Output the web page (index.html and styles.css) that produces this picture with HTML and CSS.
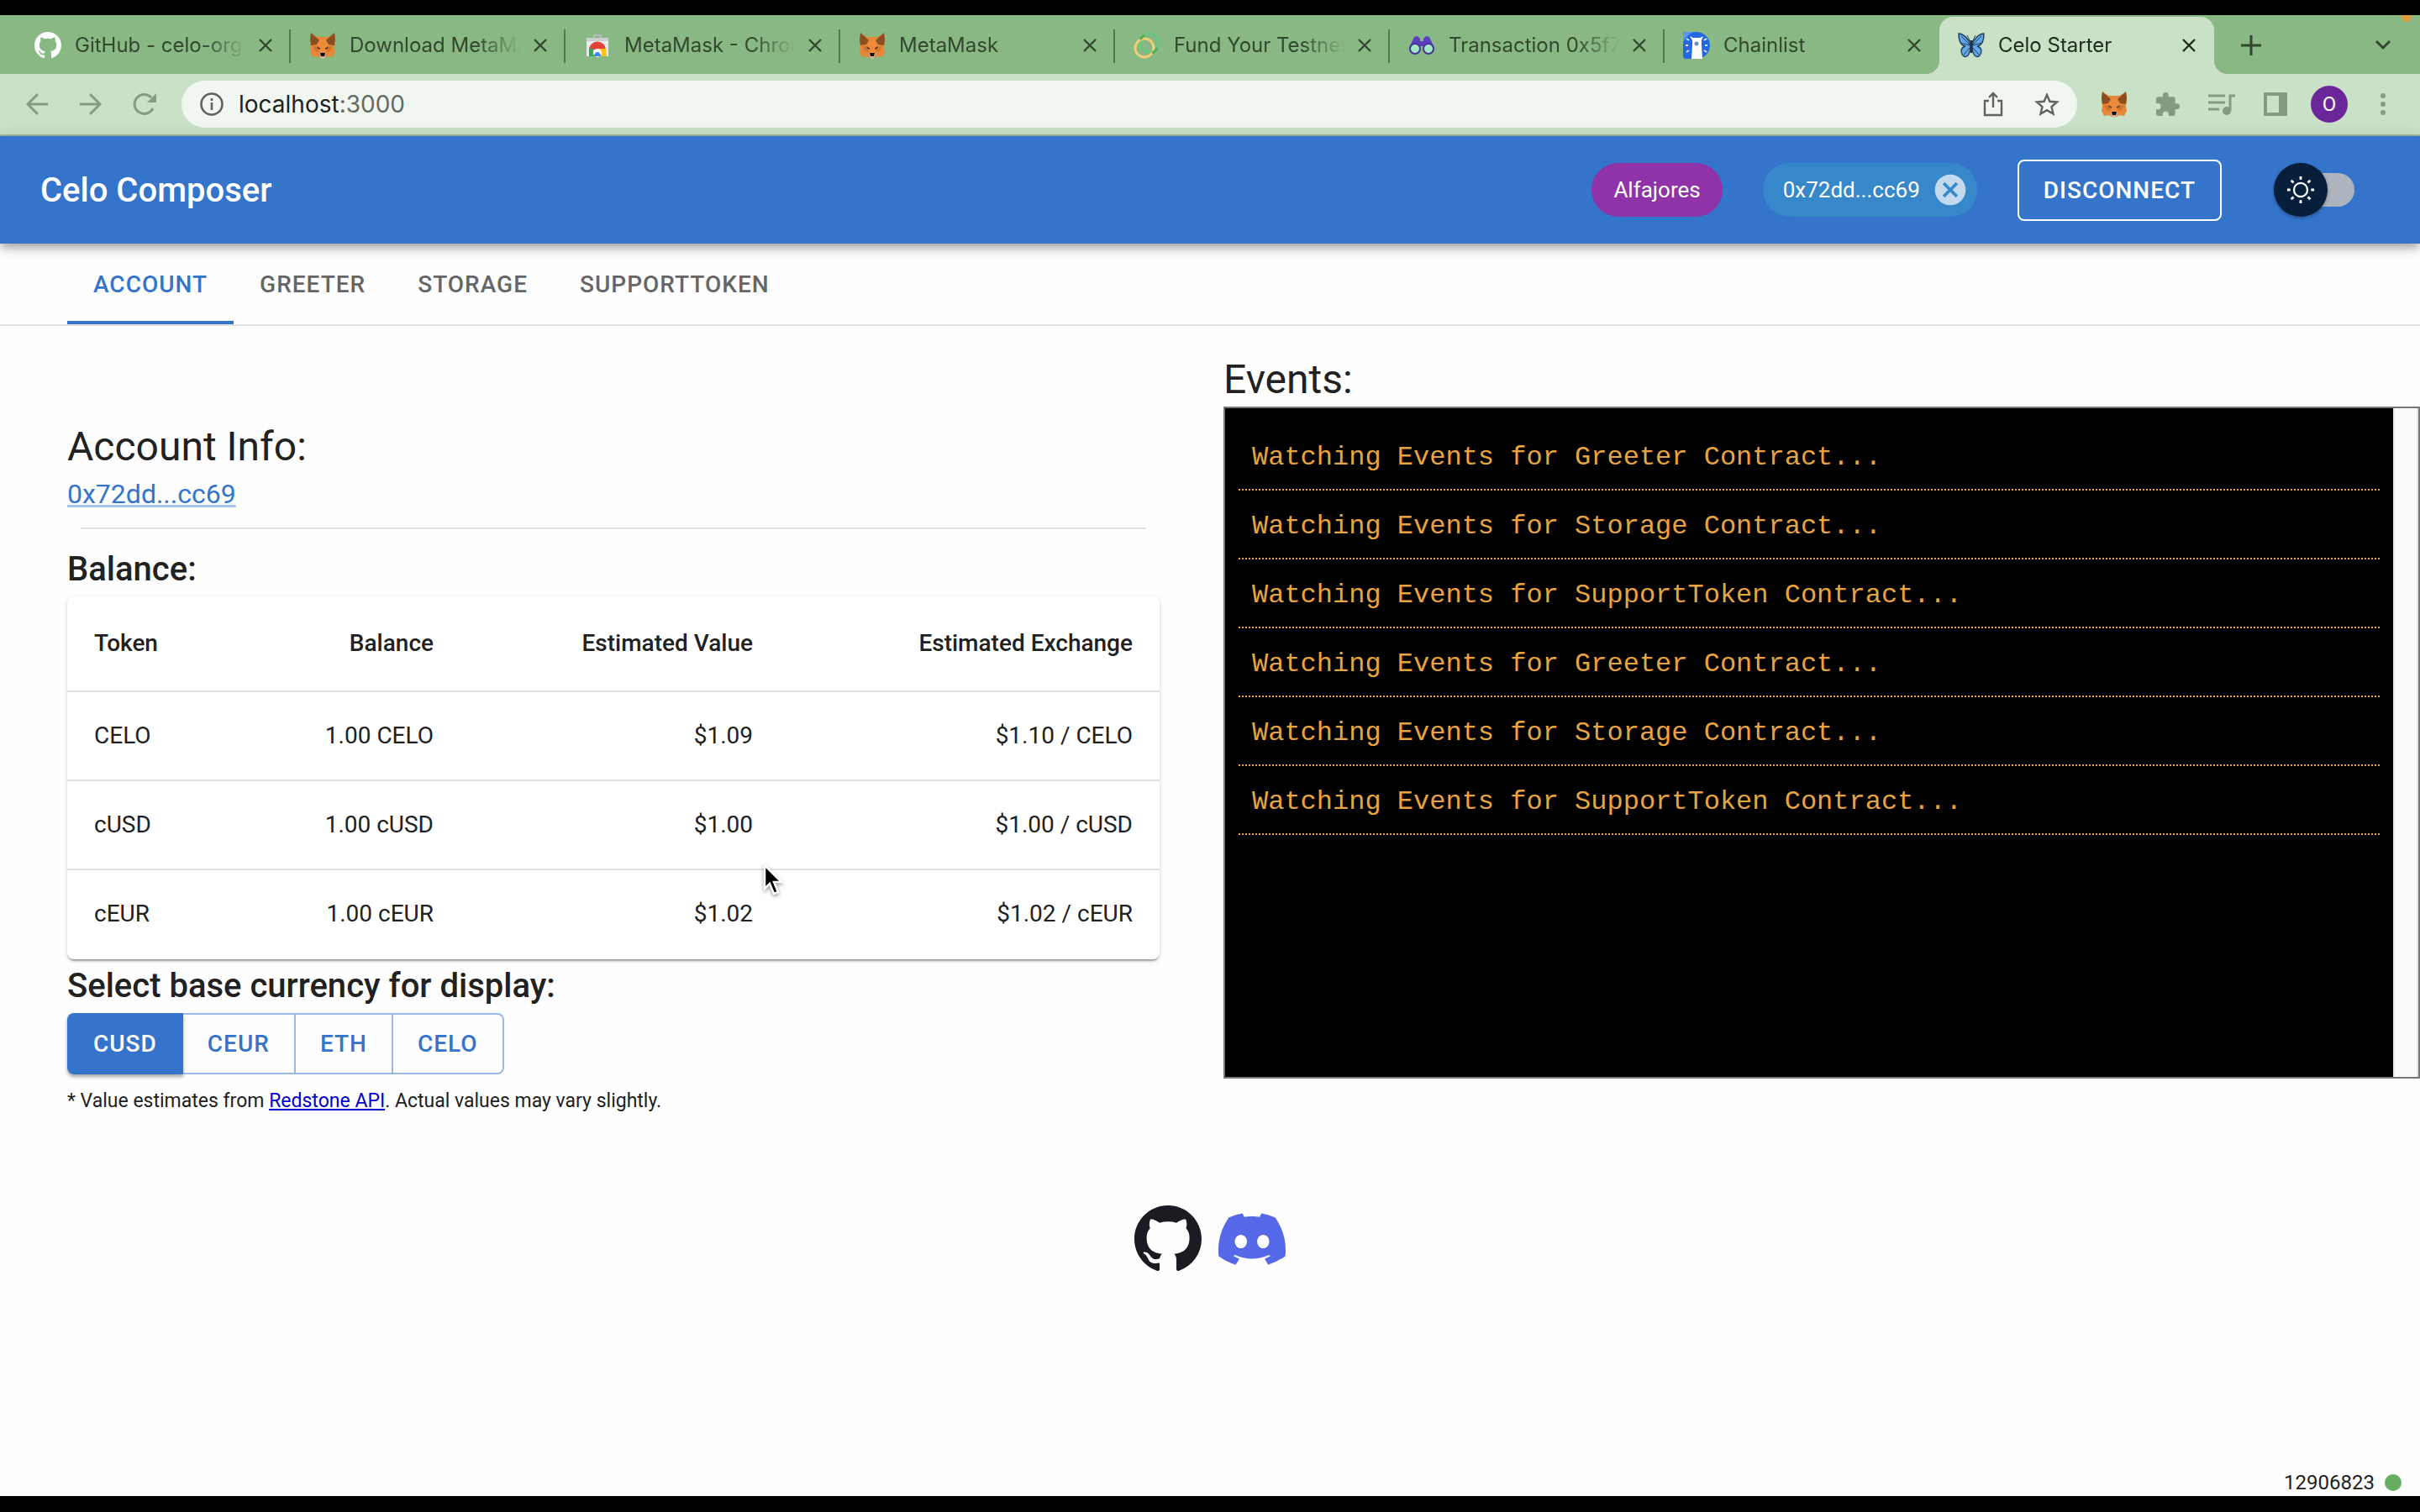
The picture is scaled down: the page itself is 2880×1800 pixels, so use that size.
FILE: index.html
```html
<!DOCTYPE html>
<html lang="en">
<head>
<meta charset="utf-8">
<title>Celo Starter</title>
<link rel="stylesheet" href="styles.css">
</head>
<body>
<svg class="sprite" aria-hidden="true">
  <symbol id="fox" viewBox="0 0 32 32">
    <path fill="#e58638" d="M2 2l8 4h12l8-4 1 8-1 9 1 5-3 6-6-1-3 2h-6l-3-2-6 1-3-6 1-5-1-9z"/>
    <path fill="#8a4e22" d="M2 1l10 9-3 5-7 1-1-7zM30 1L20 10l3 5 7 1 1-7z"/>
    <path fill="#ee8b3a" d="M12 10h8l3 8-4 7h-6l-4-7z"/>
    <path fill="#d4742c" d="M4 17l6 1 2 6-5-1zM28 17l-6 1-2 6 5-1z"/>
    <path fill="#5c4433" d="M9 17l4 2v2l-3-1zM23 17l-4 2v2l3-1z"/>
    <path fill="#c9b5a5" d="M12 25h8l-1 5-2 2h-2l-2-2z"/>
    <path fill="#0e0f12" d="M13 25h6l-1 4h-4z"/>
  </symbol>
  <symbol id="github" viewBox="0 0 16 16">
    <path d="M8 0C3.58 0 0 3.58 0 8c0 3.54 2.29 6.53 5.47 7.59.4.07.55-.17.55-.38 0-.19-.01-.82-.01-1.49-2.01.37-2.53-.49-2.69-.94-.09-.23-.48-.94-.82-1.13-.28-.15-.68-.52-.01-.53.63-.01 1.08.58 1.23.82.72 1.21 1.87.87 2.33.66.07-.52.28-.87.51-1.07-1.78-.2-3.64-.89-3.64-3.95 0-.87.31-1.59.82-2.15-.08-.2-.36-1.02.08-2.12 0 0 .67-.21 2.2.82.64-.18 1.32-.27 2-.27s1.36.09 2 .27c1.53-1.04 2.2-.82 2.2-.82.44 1.1.16 1.92.08 2.12.51.56.82 1.27.82 2.15 0 3.07-1.87 3.75-3.65 3.95.29.25.54.73.54 1.48 0 1.07-.01 1.93-.01 2.2 0 .21.15.46.55.38A8.01 8.01 0 0 0 16 8c0-4.42-3.58-8-8-8z"/>
  </symbol>
  <symbol id="cross" viewBox="0 0 16 16"><path d="M1 1l14 14M15 1L1 15" stroke="currentColor" stroke-width="2.4"/></symbol>
</svg>

<header class="browser">
  <div class="tab-strip">
    <div class="tab"><svg class="favicon white"><use href="#github"/></svg><span class="tab-title">GitHub - celo-org</span><button class="tab-close" aria-label="Close tab"><svg><use href="#cross"/></svg></button></div>
    <div class="tab"><svg class="favicon"><use href="#fox"/></svg><span class="tab-title">Download MetaMa</span><button class="tab-close" aria-label="Close tab"><svg><use href="#cross"/></svg></button></div>
    <div class="tab"><svg class="favicon" viewBox="0 0 32 32"><path fill="none" stroke="#b9bcbd" stroke-width="2" d="M12 8V4h8v4"/><path fill="#e8eaed" d="M3 7h26v22H3z"/><path fill="#ccced2" d="M3 7h26v4H3z"/><path fill="#e14434" d="M6 22a10 10 0 0 1 20-1H16z"/><path fill="#35a853" d="M6 19v10h8l-4-9z"/><path fill="#fbc116" d="M18 20h8l1 9h-9z"/><circle cx="16" cy="25" r="5" fill="#fff"/><path fill="#4285f4" d="M12 29a4 5 0 1 1 8 0z"/></svg><span class="tab-title">MetaMask - Chrom</span><button class="tab-close" aria-label="Close tab"><svg><use href="#cross"/></svg></button></div>
    <div class="tab"><svg class="favicon"><use href="#fox"/></svg><span class="tab-title">MetaMask</span><button class="tab-close" aria-label="Close tab"><svg><use href="#cross"/></svg></button></div>
    <div class="tab"><svg class="favicon" viewBox="0 0 32 32" fill="none" stroke-width="3"><circle cx="19" cy="13" r="11" stroke="#67c682"/><circle cx="13" cy="19" r="11" stroke="#f0ce75"/><path stroke="#4fae52" d="M8 9a11 11 0 0 1 5-5M28 19a11 11 0 0 1-6 6"/></svg><span class="tab-title">Fund Your Testnet</span><button class="tab-close" aria-label="Close tab"><svg><use href="#cross"/></svg></button></div>
    <div class="tab"><svg class="favicon" viewBox="0 0 32 32"><path fill="#5b3fc0" d="M1 19L6 8q1-3 5-3l3 3v3h4V8l3-3q4 0 5 3l5 11-9 2h-3l-1-4h-4l-1 4H9z"/><circle cx="8" cy="20" r="7" fill="#48329b"/><circle cx="24" cy="20" r="7" fill="#48329b"/><circle cx="8" cy="20" r="5" fill="#a3e6c0"/><circle cx="24" cy="20" r="5" fill="#a3e6c0"/></svg><span class="tab-title">Transaction 0x5f7</span><button class="tab-close" aria-label="Close tab"><svg><use href="#cross"/></svg></button></div>
    <div class="tab"><svg class="favicon" viewBox="0 0 32 32"><path fill="#2467e3" d="M0 3q0-3 3-3h13a16 16 0 0 1 0 32H3q-3 0-3-3z"/><path fill="#5f97f0" d="M0 3q0-3 3-3h9Q4 4 0 12z"/><path fill="#fff" d="M8 5l4 2h8l4-2-2 5v6l1 16H10l1-16v-6z"/><circle cx="16" cy="14" r="2.500" fill="#6f8fc4"/><path stroke="#dbe7fc" stroke-width="2" d="M3 16h3M4 8l3 2M4 24l3-2M26 16h3M25 10l3-2M25 22l3 2"/></svg><span class="tab-title">Chainlist</span><button class="tab-close" aria-label="Close tab"><svg><use href="#cross"/></svg></button></div>
    <div class="tab active"><svg class="favicon" viewBox="0 0 32 32"><path fill="#62a8ea" stroke="#22405e" stroke-width="1.400" d="M15 15C13 8 6 2 1 2c0 7 2 14 8 15-6 2-6 7-3 11 4 4 8 0 9-9zM17 15c2-7 9-13 14-13 0 7-2 14-8 15 6 2 6 7 3 11-4 4-8 0-9-9z"/><path fill="none" stroke="#22405e" d="M4 5l11 11L3 13M28 5L17 16l12-3M7 27l8-9M25 27l-8-9M15 12l-4-8M17 12l4-8"/><path stroke="#22303c" stroke-width="2.600" d="M16 10v15"/></svg><span class="tab-title">Celo Starter</span><button class="tab-close" aria-label="Close tab"><svg><use href="#cross"/></svg></button></div>
    <button class="new-tab" aria-label="New tab"><svg viewBox="0 0 24 24"><path stroke="currentColor" stroke-width="3" d="M12 0v24M0 12h24"/></svg></button>
    <button class="tab-search" aria-label="Search tabs"><svg viewBox="0 0 20 12"><path fill="none" stroke="currentColor" stroke-width="3" d="M2 1l8 8 8-8"/></svg></button>
    <span class="recording-dot"></span>
  </div>
  <div class="toolbar">
    <button class="tool" aria-label="Back"><svg viewBox="0 0 28 28"><path fill="none" stroke="currentColor" stroke-width="3" d="M27 14H3M15 2L3 14l12 12"/></svg></button>
    <button class="tool" aria-label="Forward"><svg viewBox="0 0 28 28"><path fill="none" stroke="currentColor" stroke-width="3" d="M1 14h24M13 2l12 12-12 12"/></svg></button>
    <button class="tool" aria-label="Reload"><svg viewBox="0 0 28 28"><path fill="none" stroke="currentColor" stroke-width="3" d="M24 19a11.500 11.500 0 1 1-2-13"/><path fill="currentColor" d="M28 1v11H17z"/></svg></button>
    <div class="address">
      <svg class="info" viewBox="0 0 28 28"><circle cx="14" cy="14" r="12.500" fill="none" stroke="currentColor" stroke-width="2.600"/><path stroke="currentColor" stroke-width="2.600" d="M14 12v9M14 7v3"/></svg>
      <span class="url">localhost<span class="port">:3000</span></span>
      <button class="tool dark" aria-label="Share"><svg viewBox="0 0 28 28"><path fill="none" stroke="currentColor" stroke-width="2.400" d="M9 10H4v17h20V10h-5M14 18V2M9 6l5-5 5 5"/></svg></button>
      <button class="tool dark" aria-label="Bookmark"><svg viewBox="0 0 28 28"><path fill="none" stroke="currentColor" stroke-width="2.400" d="M14 3l3.400 7.800 8.600.7-6.500 5.600 2 8.400-7.500-4.400-7.500 4.400 2-8.400L2 11.500l8.600-.7z"/></svg></button>
    </div>
    <button class="tool ext" aria-label="MetaMask"><svg><use href="#fox"/></svg></button>
    <button class="tool" aria-label="Extensions"><svg viewBox="2 1 21 21"><path fill="currentColor" d="M20.500 11H19V7a2 2 0 0 0-2-2h-4V3.500a2.500 2.500 0 0 0-5 0V5H4a2 2 0 0 0-2 2v3.800h1.500a2.700 2.700 0 0 1 0 5.400H2V20a2 2 0 0 0 2 2h3.800v-1.500a2.700 2.700 0 0 1 5.400 0V22H17a2 2 0 0 0 2-2v-4h1.500a2.500 2.500 0 0 0 0-5z"/></svg></button>
    <button class="tool wide" aria-label="Media"><svg viewBox="0 0 32 28"><path fill="none" stroke="currentColor" stroke-width="3" d="M0 4h20M0 12h20M0 20h13M26 22V4h6"/><circle cx="22" cy="22" r="5" fill="currentColor"/></svg></button>
    <button class="tool" aria-label="Side panel"><svg viewBox="0 0 28 28"><path fill="currentColor" fill-rule="evenodd" d="M0 0h28v28H0zM4 4v20h14V4z"/></svg></button>
    <button class="avatar">O</button>
    <button class="tool" aria-label="Menu"><svg viewBox="0 0 28 28"><g fill="currentColor"><circle cx="14" cy="4" r="3"/><circle cx="14" cy="14" r="3"/><circle cx="14" cy="24" r="3"/></g></svg></button>
  </div>
</header>

<div class="app-bar">
  <h1 class="brand">Celo Composer</h1>
  <span class="chip network">Alfajores</span>
  <span class="chip wallet">0x72dd...cc69<button class="chip-remove" aria-label="Remove"><svg viewBox="0 0 24 24"><path fill="currentColor" d="M12 2C6.470 2 2 6.470 2 12s4.470 10 10 10 10-4.470 10-10S17.530 2 12 2zm5 13.590L15.590 17 12 13.410 8.410 17 7 15.590 10.590 12 7 8.410 8.410 7 12 10.590 15.590 7 17 8.410 13.410 12 17 15.590z"/></svg></button></span>
  <button class="disconnect">DISCONNECT</button>
  <label class="theme-switch">
    <input type="checkbox" aria-label="Dark mode">
    <span class="thumb"><svg viewBox="0 0 36 36"><circle cx="18" cy="18" r="8.500" fill="none" stroke="#fff" stroke-width="2.400"/><path stroke="#fff" stroke-width="3" d="M18 1v4M18 31v4M1 18h4M31 18h4M6 6l3 3M27 27l3 3M6 30l3-3M27 9l3-3"/></svg></span>
  </label>
</div>

<nav class="page-tabs">
  <button class="page-tab selected">ACCOUNT</button>
  <button class="page-tab">GREETER</button>
  <button class="page-tab">STORAGE</button>
  <button class="page-tab">SUPPORTTOKEN</button>
</nav>

<main class="content">
  <section class="account">
    <h2 class="heading">Account Info:</h2>
    <a class="address-link" href="#">0x72dd...cc69</a>
    <hr class="divider">
    <h3 class="subheading">Balance:</h3>
    <div class="card">
      <table class="balances">
        <thead><tr><th class="token">Token</th><th class="balance">Balance</th><th class="value">Estimated Value</th><th>Estimated Exchange</th></tr></thead>
        <tbody>
          <tr><td class="token">CELO</td><td>1.00 CELO</td><td>$1.09</td><td>$1.10 / CELO</td></tr>
          <tr><td class="token">cUSD</td><td>1.00 cUSD</td><td>$1.00</td><td>$1.00 / cUSD</td></tr>
          <tr><td class="token">cEUR</td><td>1.00 cEUR</td><td>$1.02</td><td>$1.02 / cEUR</td></tr>
        </tbody>
      </table>
      <svg class="pointer" viewBox="0 0 24 38"><path fill="#000" stroke="#fff" stroke-width="2.500" d="M2 2v28l6-6 5 12 5-2-5-12h9z"/></svg>
    </div>
    <h3 class="subheading">Select base currency for display:</h3>
    <div class="currency-group">
      <button class="currency chosen">CUSD</button><button class="currency">CEUR</button><button class="currency">ETH</button><button class="currency">CELO</button>
    </div>
    <p class="note">* Value estimates from <a href="#">Redstone API</a>. Actual values may vary slightly.</p>
  </section>
  <section class="events">
    <h2 class="heading">Events:</h2>
    <div class="console">
      <ul class="log">
        <li>Watching Events for Greeter Contract...</li>
        <li>Watching Events for Storage Contract...</li>
        <li>Watching Events for SupportToken Contract...</li>
        <li>Watching Events for Greeter Contract...</li>
        <li>Watching Events for Storage Contract...</li>
        <li>Watching Events for SupportToken Contract...</li>
      </ul>
      <div class="scroll-track"></div>
    </div>
  </section>
</main>

<div class="social">
  <a href="#" aria-label="GitHub"><svg class="gh"><use href="#github"/></svg></a>
  <a href="#" aria-label="Discord"><svg class="discord" viewBox="0 0 24 24"><path fill="currentColor" d="M20.317 4.370a19.791 19.791 0 0 0-4.885-1.515.074.074 0 0 0-.079.037c-.21.375-.444.864-.608 1.250a18.270 18.270 0 0 0-5.487 0 12.640 12.640 0 0 0-.617-1.250.077.077 0 0 0-.079-.037A19.736 19.736 0 0 0 3.677 4.370a.070.070 0 0 0-.032.027C.533 9.046-.320 13.580.099 18.058a.082.082 0 0 0 .031.057 19.900 19.900 0 0 0 5.993 3.030.078.078 0 0 0 .084-.028 14.090 14.090 0 0 0 1.226-1.994.076.076 0 0 0-.041-.106 13.107 13.107 0 0 1-1.872-.892.077.077 0 0 1-.008-.128 10.200 10.200 0 0 0 .372-.292.074.074 0 0 1 .077-.010c3.928 1.793 8.180 1.793 12.062 0a.074.074 0 0 1 .078.010c.120.098.246.198.373.292a.077.077 0 0 1-.006.127 12.299 12.299 0 0 1-1.873.892.077.077 0 0 0-.041.107c.360.698.772 1.362 1.225 1.993a.076.076 0 0 0 .084.028 19.839 19.839 0 0 0 6.002-3.030.077.077 0 0 0 .032-.054c.500-5.177-.838-9.674-3.549-13.660a.061.061 0 0 0-.031-.030zM8.020 15.330c-1.183 0-2.157-1.085-2.157-2.419 0-1.333.956-2.419 2.157-2.419 1.210 0 2.176 1.096 2.157 2.420 0 1.333-.956 2.418-2.157 2.418zm7.975 0c-1.183 0-2.157-1.085-2.157-2.419 0-1.333.955-2.419 2.157-2.419 1.210 0 2.176 1.096 2.157 2.420 0 1.333-.946 2.418-2.157 2.418z"/></svg></a>
</div>

<footer class="status"><span>12906823</span><span class="status-dot"></span></footer>
</body>
</html>
```
FILE: styles.css
```css
* { box-sizing: border-box; }

body {
  margin: 0;
  min-height: 100vh;
  display: flex;
  flex-direction: column;
  border-top: 18px solid #000;
  border-bottom: 19px solid #000;
  background: #fefefe;
  color: #212121;
  font-family: Roboto, "Liberation Sans", sans-serif;
  font-size: 28px;
}

button {
  border: 0;
  padding: 0;
  background: none;
  color: inherit;
  font: inherit;
}

h1, h2, h3, p, ul { margin: 0; padding: 0; }
svg { display: block; overflow: visible; }
.sprite { position: absolute; width: 0; height: 0; }

/* Browser chrome */
.browser {
  font-family: Inter, "Liberation Sans", sans-serif;
  border-bottom: 2px solid #9fb79b;
}

.tab-strip {
  position: relative;
  display: flex;
  height: 70px;
  padding: 2px 34px 0 19px;
  background: #88b883;
  color: #33472f;
  overflow: hidden;
}

.tab {
  position: relative;
  flex: 0 1 327px;
  min-width: 0;
  display: flex;
  align-items: center;
  gap: 16px;
  padding: 0 22px;
  font-size: 24px;
}

.tab:not(.active)::after {
  content: "";
  position: absolute;
  right: 0;
  top: 15px;
  width: 2px;
  height: 40px;
  background: #55774f;
}
.tab:nth-child(7)::after { display: none; }

.tab.active {
  border-radius: 16px 16px 0 0;
  background: #c9e1c6;
  color: #1f2a1d;
}
.tab.active::before,
.tab.active::after {
  content: "";
  position: absolute;
  bottom: 0;
  width: 16px;
  height: 16px;
}
.tab.active::before {
  left: -16px;
  background: radial-gradient(circle at 0 0, #88b883 16px, #c9e1c6 16px);
}
.tab.active::after {
  right: -16px;
  background: radial-gradient(circle at 100% 0, #88b883 16px, #c9e1c6 16px);
}

.favicon { flex: none; width: 32px; height: 32px; }
.favicon.white { fill: #fff; }

.tab-title {
  flex: 1;
  min-width: 0;
  overflow: hidden;
  white-space: nowrap;
  line-height: 32px;
  -webkit-mask-image: linear-gradient(to right, #000 75%, transparent);
  mask-image: linear-gradient(to right, #000 75%, transparent);
}

.tab-close svg { width: 16px; height: 16px; }
.new-tab { margin-left: 32px; }
.new-tab svg { width: 24px; height: 24px; }
.tab-search { margin-left: auto; }
.tab-search svg { width: 20px; height: 12px; }

.recording-dot {
  position: absolute;
  right: 10px;
  top: -4px;
  width: 12px;
  height: 12px;
  border-radius: 50%;
  background: #e09b3d;
}

.toolbar {
  display: flex;
  align-items: center;
  gap: 36px;
  height: 72px;
  padding: 0 30px;
  background: #c9e1c6;
  color: #869983;
}

.tool { flex: none; }
.tool svg { width: 28px; height: 28px; }
.tool.ext, .tool.wide { margin: 0 -2px; }
.tool.ext svg, .tool.wide svg { width: 32px; }
.tool.ext svg { height: 32px; }
.tool.dark { color: #5d645c; }

.address {
  flex: 1;
  display: flex;
  align-items: center;
  gap: 36px;
  height: 56px;
  margin: 0 -6px;
  padding: 0 22px;
  border-radius: 28px;
  background: #f0f7f0;
}
.info { width: 28px; height: 28px; color: #5d645c; margin-right: -18px; }
.url { flex: 1; font-size: 28px; color: #1e211e; }
.port { color: #646a63; }

.avatar {
  flex: none;
  width: 44px;
  height: 44px;
  margin: 0 -8px;
  border-radius: 50%;
  background: #6b2699;
  color: #fff;
  font-family: Roboto, sans-serif;
  font-size: 24px;
}

/* App bar */
.app-bar {
  position: relative;
  display: flex;
  align-items: center;
  height: 128px;
  padding: 0 78px 0 48px;
  background: #3475cb;
  color: #fff;
  box-shadow: 0 4px 8px -2px rgba(0, 0, 0, .2), 0 8px 10px rgba(0, 0, 0, .14), 0 2px 20px rgba(0, 0, 0, .12);
}
.brand { flex: 1; font-size: 40px; font-weight: 500; }

.chip {
  display: flex;
  align-items: center;
  height: 64px;
  padding: 0 26px;
  border-radius: 32px;
  font-size: 26px;
  margin-right: 48px;
}
.network { background: #9033a8; }
.wallet { background: #3688cb; padding: 0 10px 0 24px; gap: 14px; }
.chip-remove { color: #c3daee; }
.chip-remove svg { width: 44px; height: 44px; }

.disconnect {
  height: 73px;
  padding: 0 29px;
  border: 2px solid #fff;
  border-radius: 8px;
  font-weight: 500;
  letter-spacing: 1px;
}

.theme-switch {
  display: flex;
  align-items: center;
  position: relative;
  width: 80px;
  height: 64px;
  margin-left: 78px;
}
.theme-switch input {
  appearance: none;
  margin: 0;
  width: 80px;
  height: 40px;
  border-radius: 20px;
  background: #adb4bd;
}
.thumb {
  position: absolute;
  left: -16px;
  top: 0;
  width: 64px;
  height: 64px;
  display: grid;
  place-items: center;
  border-radius: 50%;
  background: #071f3b;
  box-shadow: 0 2px 4px rgba(0, 0, 0, .3);
}
.thumb svg { width: 34px; height: 34px; }

/* Section tabs */
.page-tabs {
  display: flex;
  height: 98px;
  padding-left: 80px;
  border-bottom: 2px solid #e0e0e0;
}
.page-tab {
  padding: 4px 31px 0;
  border-bottom: 4px solid transparent;
  color: #666;
  font-weight: 500;
  letter-spacing: 1px;
}
.page-tab.selected { color: #3475cb; border-color: #3475cb; }

/* Content */
.content {
  display: grid;
  grid-template-columns: minmax(0, 1300fr) minmax(0, 1424fr);
  gap: 76px;
  padding-left: 80px;
}
.account { padding-top: 112px; }
.events { padding-top: 32px; }

.heading { font-size: 48px; font-weight: 400; line-height: 64px; }
.subheading { font-size: 40px; font-weight: 500; line-height: 64px; }

.address-link {
  display: block;
  width: fit-content;
  font-size: 32px;
  line-height: 48px;
  color: #3475cb;
  text-decoration-color: #a8c3e8;
}
.divider {
  margin: 16px;
  border: 0;
  border-top: 2px solid #e0e0e0;
}

.card {
  position: relative;
  border-radius: 8px;
  background: #fff;
  box-shadow: 0 4px 2px -2px rgba(0, 0, 0, .2), 0 2px 2px rgba(0, 0, 0, .14), 0 2px 6px rgba(0, 0, 0, .12);
}
.balances { width: 100%; border-collapse: collapse; table-layout: fixed; }
.balances th, .balances td {
  padding: 32px;
  border-bottom: 2px solid #e0e0e0;
  text-align: right;
  line-height: 40px;
}
.balances th { font-weight: 500; line-height: 48px; }
.balances th:nth-child(1) { width: 182px; }
.balances th:nth-child(2) { width: 286px; }
.balances th:nth-child(3) { width: 380px; }
.balances .token { text-align: left; }
.balances tr:last-child td { border-bottom-color: transparent; }

.pointer {
  position: absolute;
  left: 828px;
  top: 318px;
  width: 24px;
  height: 38px;
  filter: drop-shadow(0 2px 2px rgba(0, 0, 0, .4));
}

.currency-group { display: flex; }
.currency {
  height: 73px;
  padding: 0 29px;
  border: 2px solid #99b9e5;
  border-left-width: 0;
  color: #3475cb;
  font-weight: 500;
  letter-spacing: 1px;
}
.currency:last-child { border-radius: 0 8px 8px 0; }
.currency.chosen {
  padding: 0 31px;
  border: 0;
  border-radius: 8px 0 0 8px;
  background: #3475cb;
  color: #fff;
  box-shadow: 0 3px 4px rgba(0, 0, 0, .35);
}

.note { margin-top: 12px; font-size: 23px; line-height: 40px; }
.note a { color: #0000d0; }

.console {
  display: flex;
  min-height: 800px;
  border: 2px solid #767676;
  background: #000;
}
.log {
  flex: 1;
  padding: 16px;
  list-style: none;
  color: #e8a440;
  font-family: "Courier New", "Liberation Mono", monospace;
  font-size: 32px;
  line-height: 48px;
}
.log li { padding: 19px 16px 13px; border-bottom: 2px dotted #e8a440; }
.scroll-track {
  width: 30px;
  background: #fafafa;
  border: solid #e6e6e6;
  border-width: 0 2px;
}

/* Footer */
.social {
  display: flex;
  justify-content: center;
  gap: 20px;
  margin-top: 104px;
}
.gh, .discord { width: 80px; height: 80px; }
.gh { fill: #1b1c22; }
.discord { color: #5468e8; }

.status {
  display: flex;
  justify-content: flex-end;
  align-items: center;
  gap: 12px;
  margin-top: auto;
  padding-right: 22px;
  font-size: 24px;
  line-height: 32px;
}
.status-dot {
  width: 20px;
  height: 20px;
  border-radius: 50%;
  background: #65ad5f;
}
```
